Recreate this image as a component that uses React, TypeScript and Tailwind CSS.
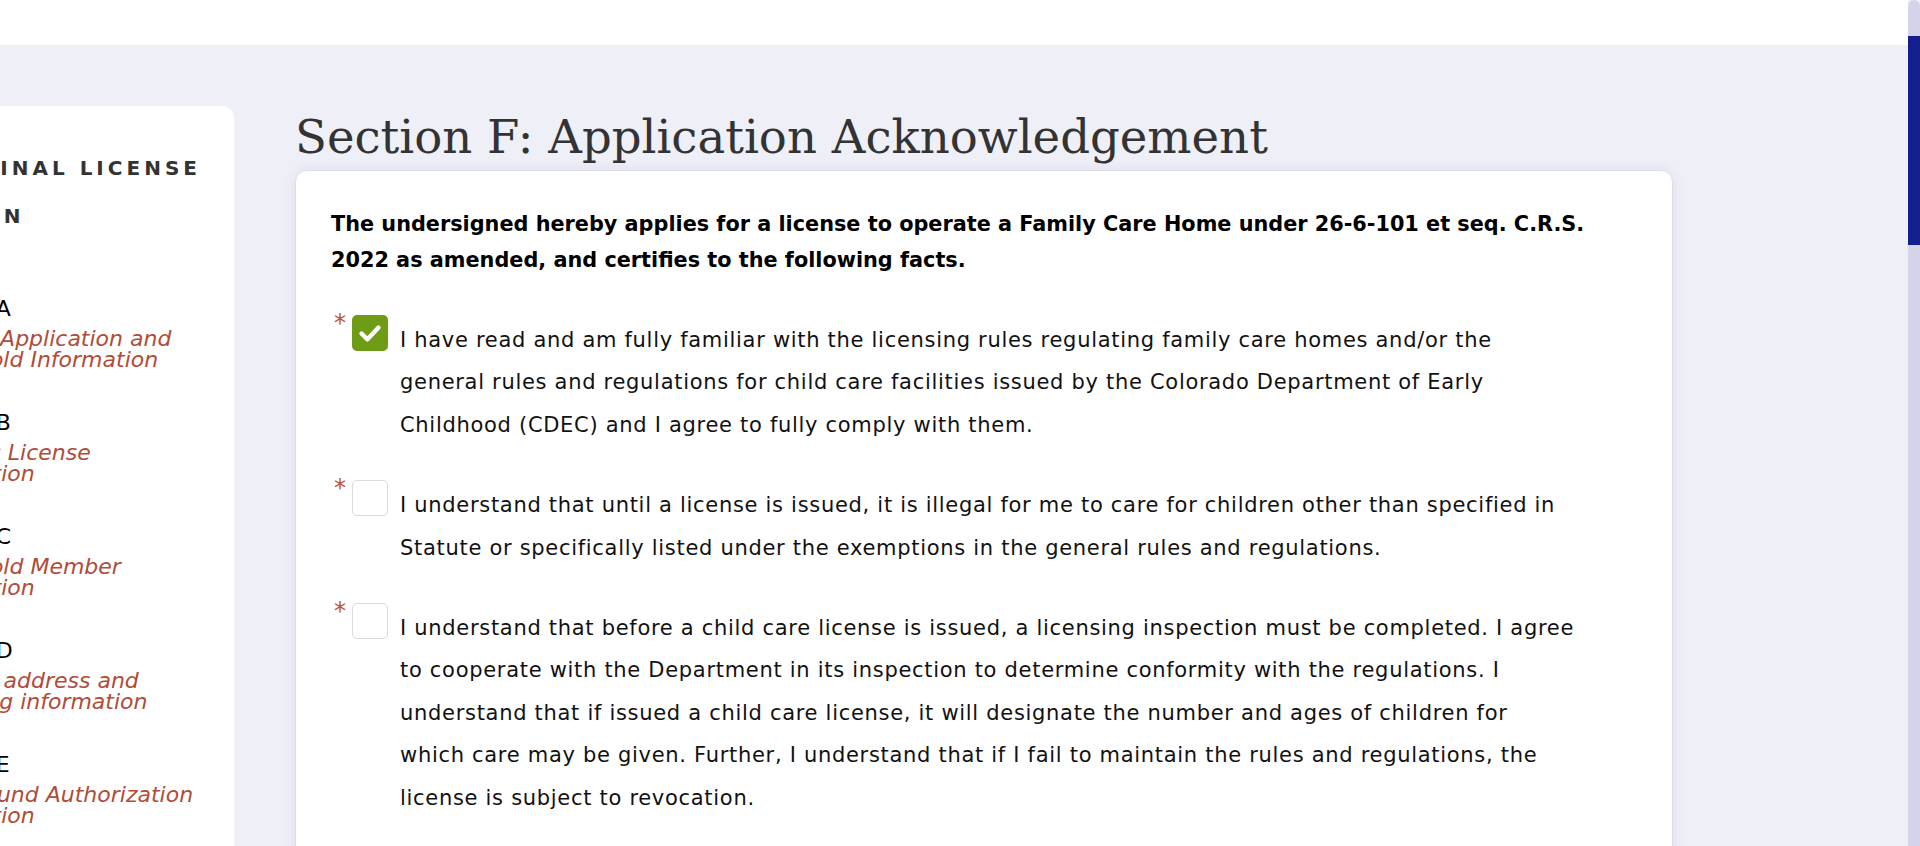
import React from "react";

type Item = { checked: boolean; lines: string[] };

const items: Item[] = [
  {
    checked: true,
    lines: [
      "I have read and am fully familiar with the licensing rules regulating family care homes and/or the",
      "general rules and regulations for child care facilities issued by the Colorado Department of Early",
      "Childhood (CDEC) and I agree to fully comply with them.",
    ],
  },
  {
    checked: false,
    lines: [
      "I understand that until a license is issued, it is illegal for me to care for children other than specified in",
      "Statute or specifically listed under the exemptions in the general rules and regulations.",
    ],
  },
  {
    checked: false,
    lines: [
      "I understand that before a child care license is issued, a licensing inspection must be completed. I agree",
      "to cooperate with the Department in its inspection to determine conformity with the regulations. I",
      "understand that if issued a child care license, it will designate the number and ages of children for",
      "which care may be given. Further, I understand that if I fail to maintain the rules and regulations, the",
      "license is subject to revocation.",
    ],
  },
];

const sections = [
  { label: "Section A", sub: ["Original Application and", "Household Information"] },
  { label: "Section B", sub: ["Previous License", "Information"] },
  { label: "Section C", sub: ["Household Member", "Information"] },
  { label: "Section D", sub: ["Physical address and", "operating information"] },
  { label: "Section E", sub: ["Background Authorization", "Information"] },
];

function Checkbox({ checked }: { checked: boolean }) {
  if (checked) {
    return (
      <div className="-mt-[4px] flex h-[36px] w-[36px] shrink-0 items-center justify-center rounded-[5px] bg-[#6e9c17]">
        <svg width="36" height="36" viewBox="0 0 36 36" fill="none">
          <path d="M9.5 18.5l6 5.8L26.5 12.5" stroke="white" strokeWidth="4.4" strokeLinecap="round" strokeLinejoin="round" />
        </svg>
      </div>
    );
  }
  return <div className="-mt-[4px] h-[36px] w-[36px] shrink-0 rounded-[5px] border border-[#d9d9de] bg-white" />;
}

function Sidebar() {
  return (
    <aside className="-ml-[186px] h-[800px] w-[420px] shrink-0 rounded-[12px] bg-white pl-[93px] pt-[38px]">
      <div className="text-[20px] font-bold uppercase leading-[48px] tracking-[4px] text-[#333]">
        <div className="ml-[21px] whitespace-nowrap">Original License</div>
        <div className="-ml-[75px] whitespace-nowrap">Application</div>
      </div>
      <div className="mt-[58px] flex flex-col gap-[42px]">
        {sections.map((s) => (
          <div key={s.label}>
            <div className="whitespace-nowrap text-[22px] leading-[22px] text-black">{s.label}</div>
            <div className="mt-[8px] whitespace-nowrap text-[22px] italic leading-[21px] text-[#b04c38]">
              {s.sub[0]}
              <br />
              {s.sub[1]}
            </div>
          </div>
        ))}
      </div>
    </aside>
  );
}

function Main() {
  return (
    <main className="ml-[61px] w-[1378px] shrink-0">
      <h1 className="mb-[5px] mt-[3px] whitespace-nowrap font-['DejaVu_Serif',serif] text-[46.6px] font-normal leading-[56px] text-[#333]">
        Section F: Application Acknowledgement
      </h1>
      <div className="h-[700px] rounded-[12px] border border-[#dedee8] bg-white pl-[35px] pt-[35px] shadow-[0_0_14px_rgba(40,40,100,0.08)]">
        <p className="whitespace-nowrap text-[20.8px] font-bold leading-[36px] text-black">
          The undersigned hereby applies for a license to operate a Family Care Home under 26-6-101 et seq. C.R.S.
          <br />
          2022 as amended, and certifies to the following facts.
        </p>
        <div className="mt-[41px] flex flex-col gap-[38px]">
          {items.map((it, i) => (
            <div key={i} className="flex items-start">
              <span className="-mt-[8px] w-[21px] shrink-0 pl-[3px] text-[24px] leading-[24px] text-[#c0503a]">*</span>
              <Checkbox checked={it.checked} />
              <div className="ml-[12px] whitespace-nowrap text-[21px] leading-[42.4px] tracking-[0.7px] text-[#111]">
                {it.lines.map((l, j) => (
                  <div key={j}>{l}</div>
                ))}
              </div>
            </div>
          ))}
        </div>
      </div>
    </main>
  );
}

function Scrollbar() {
  return (
    <div className="h-full w-[12px] shrink-0 rounded-t-[6px] bg-[#d3d4ea] pt-[36px]">
      <div className="h-[209px] bg-[#141f8d]" />
    </div>
  );
}

export default function App() {
  return (
    <div className="flex h-[846px] w-[1920px] overflow-hidden bg-[#eeeff7] font-['DejaVu_Sans',sans-serif]">
      <div className="flex min-w-0 flex-1 flex-col">
        <div className="h-[45px] shrink-0 bg-white" />
        <div className="flex items-start pt-[61px]">
          <Sidebar />
          <Main />
        </div>
      </div>
      <Scrollbar />
    </div>
  );
}
